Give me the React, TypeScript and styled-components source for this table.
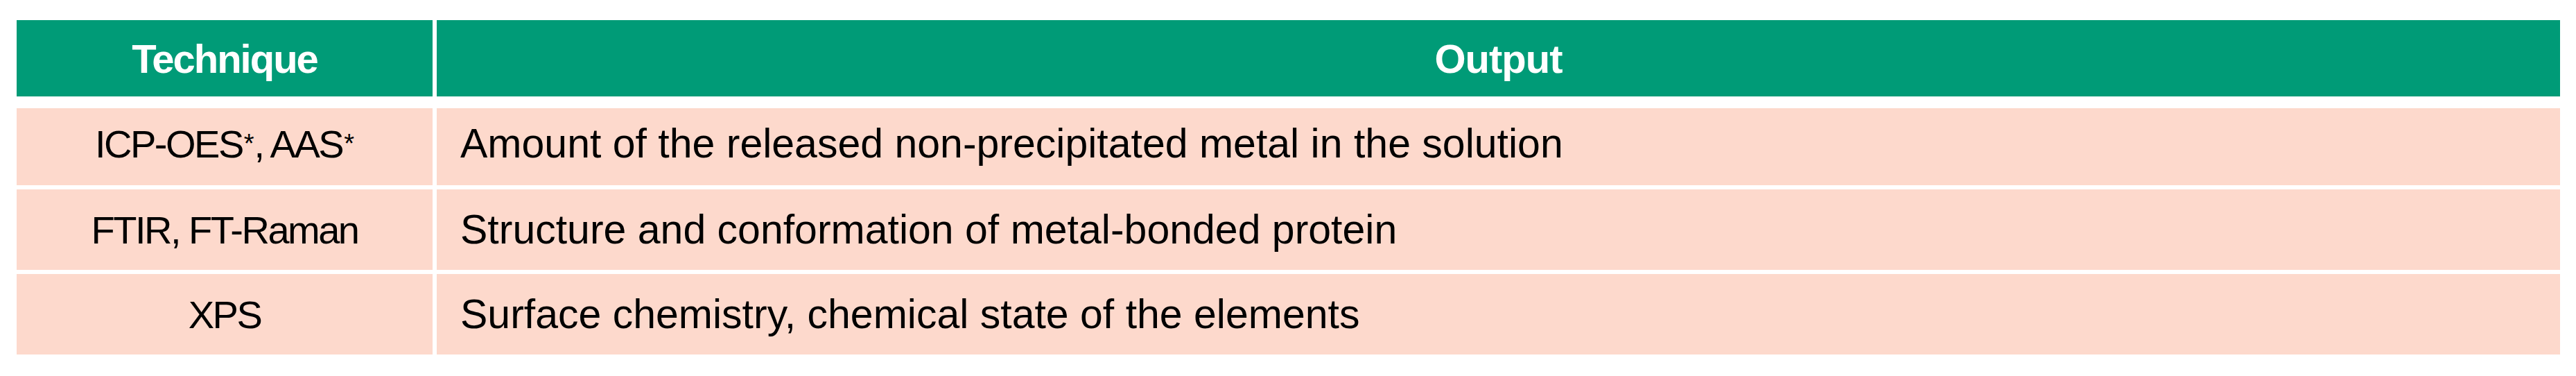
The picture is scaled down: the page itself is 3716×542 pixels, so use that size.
import React from "react";
import styled, { createGlobalStyle } from "styled-components";

const GlobalStyle = createGlobalStyle`
  html, body {
    margin: 0;
    padding: 0;
    background: #ffffff;
  }
  body {
    font-family: "Liberation Sans", Arial, sans-serif;
  }
`;

const Page = styled.div`
  width: 3716px;
  height: 542px;
  box-sizing: border-box;
  padding: 29px 23px 0 24px;
  background: #ffffff;
`;

const Table = styled.div`
  display: flex;
  flex-direction: column;
  gap: 6px;
`;

const Row = styled.div<{ $height: number; $head?: boolean }>`
  display: grid;
  grid-template-columns: 600px 1fr;
  column-gap: 6px;
  height: ${(p) => p.$height}px;
  margin-bottom: ${(p) => (p.$head ? 11 : 0)}px;
`;

const HeadCell = styled.div<{ $spacing: number }>`
  display: flex;
  align-items: center;
  justify-content: center;
  background: #009b77;
  color: #ffffff;
  font-weight: 700;
  font-size: 58px;
  letter-spacing: ${(p) => p.$spacing}px;
  line-height: normal;
`;

const Cell = styled.div<{ $align: "center" | "left"; $lift?: number }>`
  display: flex;
  align-items: center;
  justify-content: ${(p) => (p.$align === "center" ? "center" : "flex-start")};
  box-sizing: border-box;
  padding-left: ${(p) => (p.$align === "left" ? 34 : 0)}px;
  padding-bottom: ${(p) => p.$lift ?? 0}px;
  background: #fdd9cc;
  color: #000000;
  font-size: ${(p) => (p.$align === "center" ? 56 : 59)}px;
  letter-spacing: ${(p) => (p.$align === "center" ? -2.5 : 0)}px;
  line-height: normal;
  white-space: nowrap;
`;

const Star = styled.sup`
  font-size: 0.68em;
  line-height: 0;
  vertical-align: 0.6em;
  margin-left: 2px;
  letter-spacing: 0;
`;

type Item = {
  technique: React.ReactNode;
  output: string;
  height: number;
  lift?: number;
};

const rows: Item[] = [
  {
    technique: (
      <>
        ICP-OES<Star>*</Star>, AAS<Star>*</Star>
      </>
    ),
    output: "Amount of the released non-precipitated metal in the solution",
    height: 111,
    lift: 9,
  },
  {
    technique: "FTIR, FT-Raman",
    output: "Structure and conformation of metal-bonded protein",
    height: 116,
  },
  {
    technique: "XPS",
    output: "Surface chemistry, chemical state of the elements",
    height: 116,
  },
];

export default function App() {
  return (
    <>
      <GlobalStyle />
      <Page>
        <Table>
          <Row $height={110} $head>
            <HeadCell $spacing={-2}>Technique</HeadCell>
            <HeadCell $spacing={-1}>Output</HeadCell>
          </Row>
          {rows.map((r, i) => (
            <Row key={i} $height={r.height}>
              <Cell $align="center" $lift={r.lift}>
                {r.technique}
              </Cell>
              <Cell $align="left" $lift={r.lift}>
                {r.output}
              </Cell>
            </Row>
          ))}
        </Table>
      </Page>
    </>
  );
}
